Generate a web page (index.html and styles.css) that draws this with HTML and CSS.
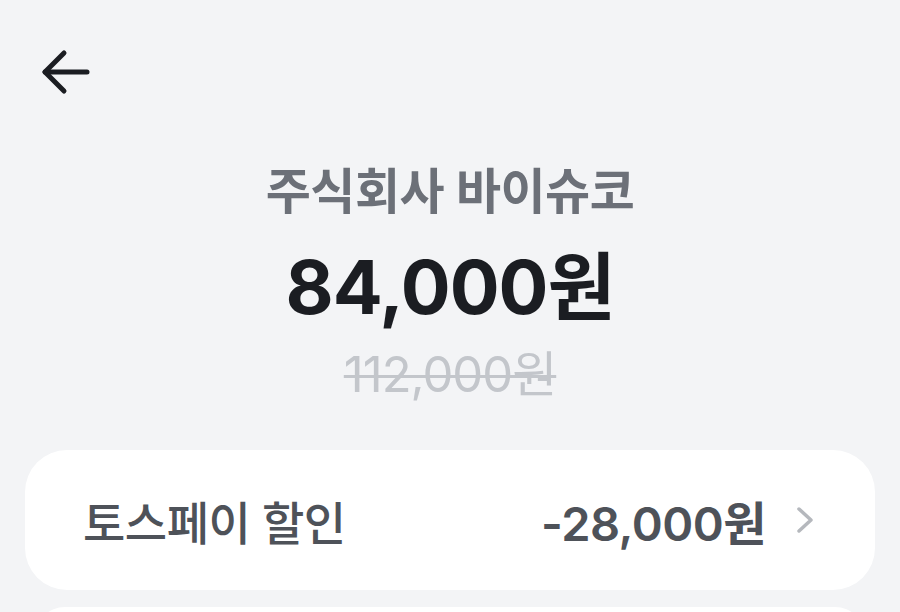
FILE: index.html
```html
<!DOCTYPE html>
<html lang="ko">
<head>
<meta charset="utf-8">
<title>결제</title>
<link rel="stylesheet" href="styles.css">
</head>
<body>
  <div class="screen">
    <header class="topbar">
      <button class="back" aria-label="뒤로">
        <svg width="54" height="48" viewBox="0 0 54 48" fill="none" stroke="#1b1d22" stroke-width="5" stroke-linecap="round" stroke-linejoin="round">
          <path d="M48 24H6"/>
          <path d="M25 5L6 24l19 19"/>
        </svg>
      </button>
    </header>

    <section class="summary">
      <p class="merchant">주식회사 바이슈코</p>
      <p class="amount">84,000원</p>
      <p class="original">112,000원</p>
    </section>

    <section class="card">
      <div class="row">
        <span class="row-label">토스페이 할인</span>
        <span class="row-value">-28,000원</span>
        <svg class="chevron" width="18" height="28" viewBox="0 0 18 28" fill="none" stroke="#b5b8bd" stroke-width="3.5" stroke-linecap="round" stroke-linejoin="round">
          <path d="M3 3l12 11L3 25"/>
        </svg>
      </div>
    </section>

    <section class="card next"></section>
  </div>
</body>
</html>
```

FILE: styles.css
```css
html, body {
  margin: 0;
  padding: 0;
  background: #f3f4f6;
}

body {
  font-family: Inter, "Noto Sans CJK KR", sans-serif;
  width: 900px;
  height: 612px;
  overflow: hidden;
}

.screen {
  display: flex;
  flex-direction: column;
  padding: 0 25px;
  height: 612px;
  overflow: hidden;
}

.topbar {
  flex: none;
  height: 154px;
  display: flex;
  align-items: flex-start;
  padding-top: 48px;
  padding-left: 14px;
  box-sizing: border-box;
}

.back {
  background: none;
  border: 0;
  padding: 0;
  display: flex;
}

.summary {
  flex: none;
  display: flex;
  flex-direction: column;
  align-items: center;
  text-align: center;
}

.summary p {
  margin: 0;
}

.merchant {
  font-size: 49px;
  font-weight: 600;
  color: #6c7078;
  line-height: 76px;
  letter-spacing: -0.5px;
}

.amount {
  font-size: 74px;
  font-weight: 700;
  color: #1b1d22;
  line-height: 114px;
  letter-spacing: -1px;
}

.original {
  font-size: 49px;
  font-weight: 400;
  color: #c3c6cb;
  line-height: 62px;
  text-decoration: line-through;
  text-decoration-thickness: 3px;
  letter-spacing: -1px;
}

.card {
  flex: none;
  background: #ffffff;
  border-radius: 42px;
  margin-top: 44px;
  height: 140px;
  display: flex;
  align-items: center;
  padding: 0 61px 0 58px;
}

.card.next {
  margin: 17px 10px 0;
  height: 60px;
  border-radius: 30px;
}

.row {
  display: flex;
  align-items: center;
  width: 100%;
}

.row-label {
  flex: 1;
  font-size: 46px;
  font-weight: 500;
  color: #4e5259;
  letter-spacing: -0.5px;
}

.row-value {
  font-size: 47px;
  font-weight: 600;
  color: #4e5259;
  letter-spacing: -0.5px;
  margin-right: 30px;
}

.chevron {
  flex: none;
}
```
